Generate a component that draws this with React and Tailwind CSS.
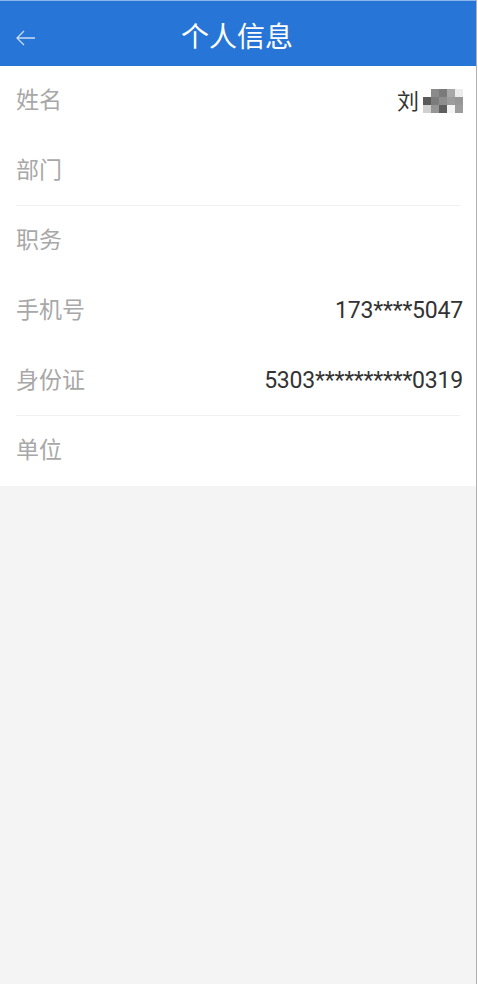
import React from "react";

const rows = [
  { label: "姓名", value: "name" },
  { label: "部门", value: "", divider: true },
  { label: "职务", value: "" },
  { label: "手机号", value: "173****5047" },
  { label: "身份证", value: "5303**********0319", divider: true },
  { label: "单位", value: "" },
];

function Mosaic() {
  const cells = [
    ["#ffffff", "#8a8a8a", "#7a7a7a", "#a8a8a8", "#ececec"],
    ["#5a5a5a", "#7c7c7c", "#8e8e8e", "#9c9c9c", "#969696"],
    ["#d0d0d0", "#959595", "#5e5e5e", "#f4f4f4", "#9c9c9c"],
  ];
  return (
    <div className="flex flex-col ml-[4px]">
      {cells.map((r, i) => (
        <div key={i} className="flex">
          {r.map((c, j) => (
            <div key={j} className="w-[8px] h-[8px]" style={{ background: c }} />
          ))}
        </div>
      ))}
    </div>
  );
}

export default function App() {
  return (
    <div
      className="w-[478px] h-[984px] bg-white flex"
      style={{ fontFamily: 'Roboto, "Noto Sans CJK SC", sans-serif' }}
    >
      <div className="w-[477px] h-full bg-[#f4f4f4] flex flex-col border-r border-[#b0b0b0]">
        <div className="h-[66px] bg-[#2775d6] border-t border-[#8fb6e8] flex items-center relative">
          <svg
            className="absolute left-[15px] top-[28px]"
            width="21"
            height="18"
            viewBox="0 0 21 18"
            fill="none"
            stroke="#c9dcf5"
            strokeWidth="1.3"
          >
            <path d="M20 9H2M9 2L2 9l7 7" />
          </svg>
          <div className="flex-1 text-center text-white text-[28px] leading-none mt-[8px] pr-[2px]">
            个人信息
          </div>
        </div>
        <div className="bg-white flex flex-col">
          {rows.map((r, i) => (
            <div key={i} className="flex flex-col">
              <div className="h-[70px] flex items-center justify-between pl-[16px] pr-[13px]">
                <span className="text-[23px] text-[#a8a8a8]">{r.label}</span>
                {r.value === "name" ? (
                  <span className="flex items-center text-[22px] text-[#333]">
                    刘
                    <Mosaic />
                  </span>
                ) : (
                  <span className="text-[23px] text-[#333] tracking-[-0.2px]">{r.value}</span>
                )}
              </div>
              {r.divider && <div className="h-px bg-[#f0f0f0] mx-[16px] -mt-px" />}
            </div>
          ))}
        </div>
      </div>
    </div>
  );
}
